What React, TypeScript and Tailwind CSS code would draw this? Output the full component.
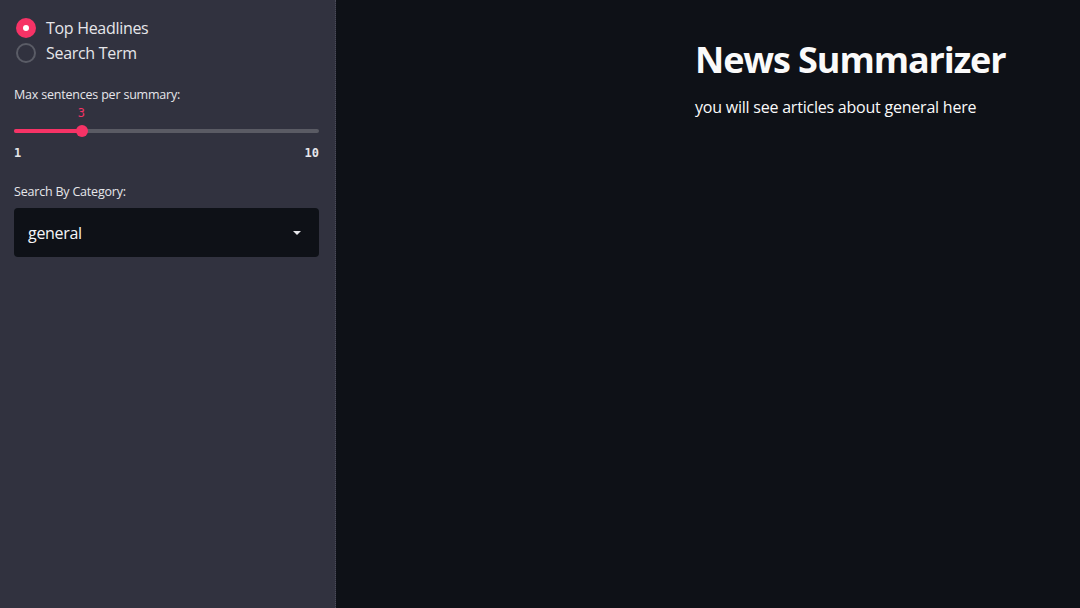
import React, { useState } from 'react';

const sans = { fontFamily: '"Open Sans", "Noto Sans", sans-serif' };
const mono = { fontFamily: '"DejaVu Sans Mono", "Liberation Mono", monospace' };

const Radio: React.FC<{ label: string; checked: boolean; onClick: () => void }> = ({ label, checked, onClick }) => (
  <button onClick={onClick} className="flex items-center h-[25px] text-left">
    {checked ? (
      <span className="w-[20px] h-[20px] rounded-full bg-[#f63366] flex items-center justify-center ml-[16px]">
        <span className="w-[6px] h-[6px] rounded-full bg-white" />
      </span>
    ) : (
      <span className="w-[20px] h-[20px] rounded-full border-2 border-[#5a5c66] ml-[16px]" />
    )}
    <span className="ml-[10px] text-[16px] text-[#e6e6ea] tracking-[-0.3px]">{label}</span>
  </button>
);

export default function App() {
  const [mode, setMode] = useState('top');
  const value = 3;
  const pct = ((value - 1) / 9) * 100;

  return (
    <div className="flex w-[1080px] h-[608px] overflow-hidden bg-[#0e1117]" style={sans}>
      <aside className="w-[336px] shrink-0 bg-[#31323f] border-r border-dotted border-[#4a4b58] pt-[15px]">
        <div className="flex flex-col">
          <Radio label="Top Headlines" checked={mode === 'top'} onClick={() => setMode('top')} />
          <Radio label="Search Term" checked={mode === 'search'} onClick={() => setMode('search')} />
        </div>

        <div className="ml-[14px] mr-[16px] mt-[22px]">
          <div className="text-[12.5px] text-[#e6e6ea] leading-[16px] tracking-[-0.2px]">Max sentences per summary:</div>
          <div className="relative h-[42px] mt-[4px]">
            <div className="absolute top-[22px] left-0 right-0 h-[4px] rounded-full bg-[#5a5b64]" />
            <div className="absolute top-[22px] left-0 h-[4px] rounded-full bg-[#f63366]" style={{ width: `${pct}%` }} />
            <div
              className="absolute top-[18px] w-[12px] h-[12px] -ml-[6px] rounded-full bg-[#f63366]"
              style={{ left: `${pct}%` }}
            />
            <div className="absolute -top-[3px] -ml-[4px] text-[12px] text-[#f63366]" style={{ ...mono, left: `${pct}%` }}>
              {value}
            </div>
          </div>
          <div className="flex justify-between text-[12px] font-semibold text-[#e6e6ea] -mt-[5px]" style={mono}>
            <span>1</span>
            <span>10</span>
          </div>
        </div>

        <div className="ml-[14px] mr-[16px] mt-[22px]">
          <div className="text-[12.5px] text-[#e6e6ea] leading-[16px] tracking-[-0.2px]">Search By Category:</div>
          <div className="mt-[8px] h-[49px] rounded-[4px] bg-[#0e1117] flex items-center justify-between pl-[14px] pr-[18px]">
            <span className="text-[16px] text-[#f5f5f7] tracking-[-0.3px]">general</span>
            <span className="w-0 h-0 border-l-[4px] border-r-[4px] border-t-[4px] border-l-transparent border-r-transparent border-t-[#e6e6ea]" />
          </div>
        </div>
      </aside>

      <main className="flex-1 pl-[359px] pt-[38px]">
        <h1 className="text-[36px] font-bold text-[#fafafa] leading-[44px] tracking-[-1.1px]">News Summarizer</h1>
        <p className="mt-[13px] text-[16px] text-[#fafafa] tracking-[-0.22px]">you will see articles about general here</p>
      </main>
    </div>
  );
}
